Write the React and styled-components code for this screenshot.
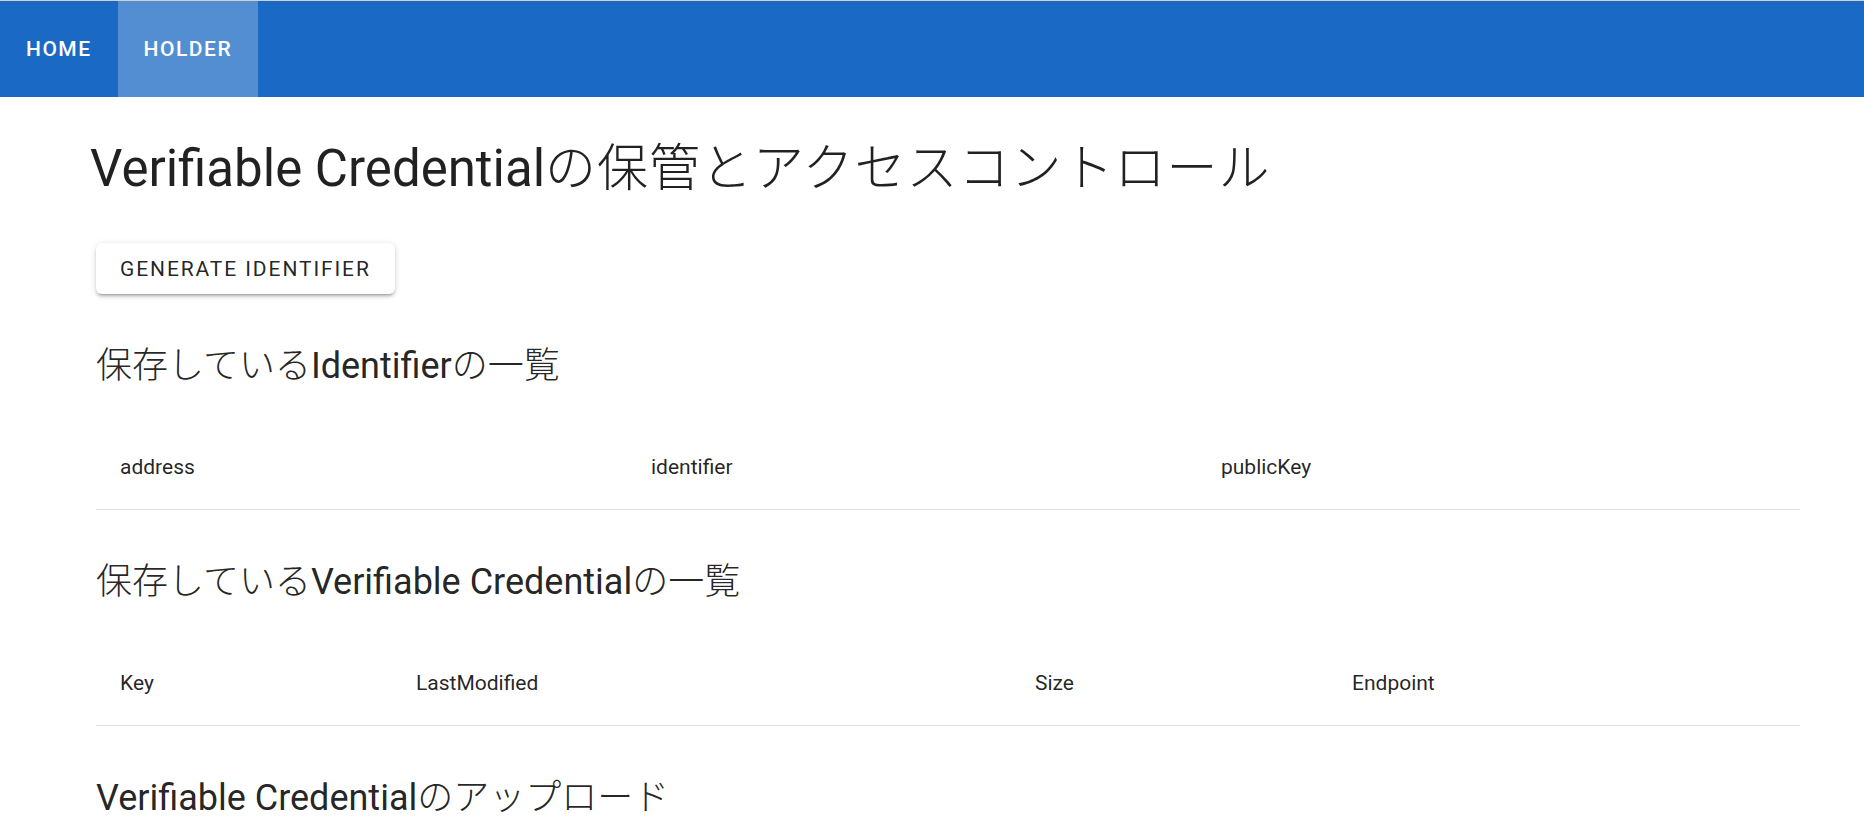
import React from 'react';
import styled, { createGlobalStyle } from 'styled-components';

const GlobalStyle = createGlobalStyle`
  html, body {
    margin: 0;
    padding: 0;
    background: #ffffff;
  }
  body {
    font-family: Roboto, "Noto Sans CJK JP", "Liberation Sans", sans-serif;
    color: rgba(0, 0, 0, 0.87);
  }
`;

const Page = styled.div`
  width: 100%;
  min-height: 834px;
  border-top: 1px solid #cfcfcf;
  box-sizing: border-box;
`;

const AppBar = styled.header`
  display: flex;
  align-items: stretch;
  height: 96px;
  background: #1a69c4;
`;

const Tab = styled.button`
  display: flex;
  align-items: center;
  justify-content: center;
  padding: 0 ${p => p.$pad}px;
  border: none;
  margin: 0;
  background: ${p => (p.$selected ? 'rgba(255, 255, 255, 0.25)' : 'transparent')};
  color: #ffffff;
  font-family: Roboto, "Liberation Sans", sans-serif;
  font-weight: 500;
  font-size: 21px;
  letter-spacing: 1.5px;
  text-transform: uppercase;
  cursor: pointer;
`;

// japanese runs: lighter weight, kept from growing the line box
const Jp = styled.span`
  font-family: "Noto Sans CJK JP", sans-serif;
  font-weight: 300;
  line-height: 1;
  letter-spacing: ${p => p.$ls || 0}px;
`;

const Title = styled.h1`
  margin: 40px 0 43px;
  padding-left: 90px;
  height: 63px;
  font-family: Roboto, "Noto Sans CJK JP", sans-serif;
  font-weight: 400;
  font-size: 51px;
  line-height: 63px;
  color: rgba(0, 0, 0, 0.87);
`;

const Content = styled.main`
  padding: 0 64px 0 96px;
`;

const Button = styled.button`
  display: block;
  height: 51px;
  padding: 0 24px;
  border: none;
  border-radius: 6px;
  background: #ffffff;
  color: rgba(0, 0, 0, 0.87);
  font-family: Roboto, "Liberation Sans", sans-serif;
  font-weight: 400;
  font-size: 21px;
  letter-spacing: 1.9px;
  text-transform: uppercase;
  box-shadow: 0 4px 2px -3px rgba(0, 0, 0, 0.2), 0 3px 3px 0 rgba(0, 0, 0, 0.14),
    0 1px 7px 0 rgba(0, 0, 0, 0.12);
  cursor: pointer;
`;

const SectionTitle = styled.h2`
  margin: 48px 0 35px;
  height: 48px;
  font-family: Roboto, "Noto Sans CJK JP", sans-serif;
  font-weight: 400;
  font-size: 36px;
  line-height: 48px;
  color: rgba(0, 0, 0, 0.87);
`;

const HeadRow = styled.div`
  display: grid;
  grid-template-columns: ${p => p.$cols};
  border-bottom: 1px solid #e0e0e0;
`;

const HeadCell = styled.div`
  padding: 24px;
  font-family: Roboto, "Liberation Sans", sans-serif;
  font-weight: 400;
  font-size: 21px;
  line-height: 36px;
  color: rgba(0, 0, 0, 0.87);
`;

function TableHead({ cols, labels }) {
  return (
    <HeadRow $cols={cols}>
      {labels.map(l => (
        <HeadCell key={l}>{l}</HeadCell>
      ))}
    </HeadRow>
  );
}

export default function App() {
  return (
    <Page>
      <GlobalStyle />
      <AppBar>
        <Tab $pad={26}>Home</Tab>
        <Tab $pad={26} $selected>Holder</Tab>
      </AppBar>
      <Title>
        Verifiable Credential<Jp $ls={1}>の保管とアクセスコントロール</Jp>
      </Title>
      <Content>
        <Button>Generate Identifier</Button>

        <SectionTitle>
          <Jp>保存している</Jp>Identifier<Jp>の一覧</Jp>
        </SectionTitle>
        <TableHead cols="531px 570px 1fr" labels={['address', 'identifier', 'publicKey']} />

        <SectionTitle>
          <Jp>保存している</Jp>Verifiable Credential<Jp>の一覧</Jp>
        </SectionTitle>
        <TableHead
          cols="296px 619px 317px 1fr"
          labels={['Key', 'LastModified', 'Size', 'Endpoint']}
        />

        <SectionTitle>
          Verifiable Credential<Jp>のアップロード</Jp>
        </SectionTitle>
      </Content>
    </Page>
  );
}
